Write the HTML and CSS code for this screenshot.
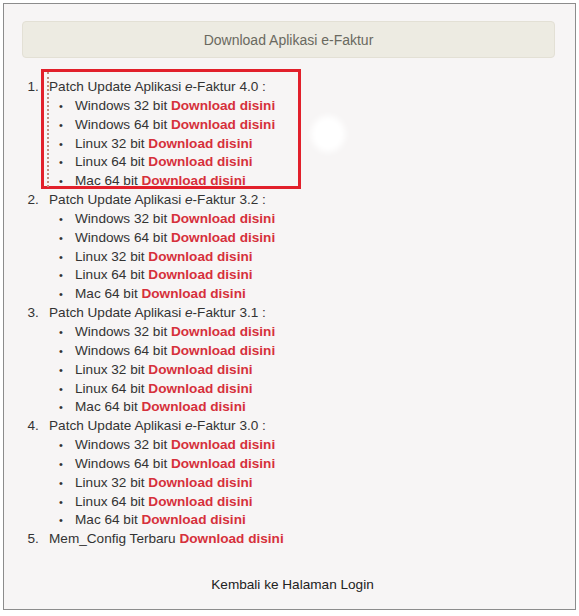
FILE: index.html
```html
<!DOCTYPE html>
<html>
<head>
<meta charset="utf-8">
<link rel="stylesheet" href="styles.css">
</head>
<body>
<div class="page">
  <div class="header">Download Aplikasi e-Faktur</div>
  <ol class="list">
    <li>Patch Update Aplikasi <i>e</i>-Faktur 4.0 :
      <ul>
        <li>Windows 32 bit <a href="#">Download disini</a></li>
        <li>Windows 64 bit <a href="#">Download disini</a></li>
        <li>Linux 32 bit <a href="#">Download disini</a></li>
        <li>Linux 64 bit <a href="#">Download disini</a></li>
        <li>Mac 64 bit <a href="#">Download disini</a></li>
      </ul>
    </li>
    <li>Patch Update Aplikasi <i>e</i>-Faktur 3.2 :
      <ul>
        <li>Windows 32 bit <a href="#">Download disini</a></li>
        <li>Windows 64 bit <a href="#">Download disini</a></li>
        <li>Linux 32 bit <a href="#">Download disini</a></li>
        <li>Linux 64 bit <a href="#">Download disini</a></li>
        <li>Mac 64 bit <a href="#">Download disini</a></li>
      </ul>
    </li>
    <li>Patch Update Aplikasi <i>e</i>-Faktur 3.1 :
      <ul>
        <li>Windows 32 bit <a href="#">Download disini</a></li>
        <li>Windows 64 bit <a href="#">Download disini</a></li>
        <li>Linux 32 bit <a href="#">Download disini</a></li>
        <li>Linux 64 bit <a href="#">Download disini</a></li>
        <li>Mac 64 bit <a href="#">Download disini</a></li>
      </ul>
    </li>
    <li>Patch Update Aplikasi <i>e</i>-Faktur 3.0 :
      <ul>
        <li>Windows 32 bit <a href="#">Download disini</a></li>
        <li>Windows 64 bit <a href="#">Download disini</a></li>
        <li>Linux 32 bit <a href="#">Download disini</a></li>
        <li>Linux 64 bit <a href="#">Download disini</a></li>
        <li>Mac 64 bit <a href="#">Download disini</a></li>
      </ul>
    </li>
    <li>Mem_Config Terbaru <a href="#">Download disini</a></li>
  </ol>
  <div class="back"><a href="#">Kembali ke Halaman Login</a></div>
  <div class="highlight"></div>
  <div class="dotted"></div>
  <div class="blob"></div>
</div>
</body>
</html>
```

FILE: styles.css
```css
html, body {
  margin: 0;
  padding: 0;
  background: #ffffff;
}
body {
  font-family: "Liberation Sans", Arial, Helvetica, sans-serif;
  font-size: 13.6px;
  color: #333333;
}
.page {
  position: relative;
  margin: 3px;
  height: 607px;
  box-sizing: border-box;
  border: 1px solid #8c8c8c;
  background: #f7f5f5;
  display: flex;
  flex-direction: column;
}
.header {
  margin: 17px 20px 0 18px;
  height: 37px;
  box-sizing: border-box;
  background: #edebe2;
  border: 1px solid #e3e0d5;
  border-radius: 4px;
  color: #6a695f;
  font-size: 14px;
  display: flex;
  align-items: center;
  justify-content: center;
}
.list {
  margin: 20px 0 0 0;
  padding-left: 45px;
  line-height: 18.85px;
}
.list > li::marker {
  content: counter(list-item) ".\00a0\00a0\2009";
}
.list ul {
  margin: 0;
  padding-left: 26px;
  list-style: disc;
}
.list ul li::marker {
  font-size: 11px;
  content: "\2022\00a0\00a0\00a0\00a0";
}
.list a {
  color: #d6303b;
  font-weight: bold;
  text-decoration: none;
}
.back {
  margin-top: 26px;
  text-align: center;
  line-height: 19px;
  padding-left: 6px;
}
.back a {
  color: #222222;
  text-decoration: none;
}
.highlight {
  position: absolute;
  left: 37px;
  top: 65px;
  width: 260px;
  height: 120px;
  box-sizing: border-box;
  border: 3px solid #e2202b;
}
.dotted {
  position: absolute;
  left: 43px;
  top: 68px;
  height: 115px;
  border-left: 2px dotted #bf8f80;
}
.blob {
  position: absolute;
  left: 307px;
  top: 112px;
  width: 34px;
  height: 36px;
  border-radius: 50%;
  background: #ffffff;
  filter: blur(3px);
}
```
